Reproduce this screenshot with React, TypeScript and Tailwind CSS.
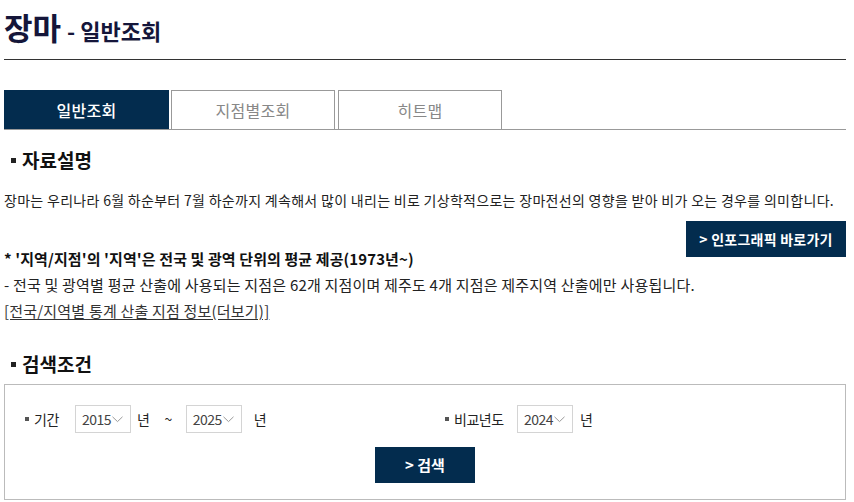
const NAVY = 'bg-[#032c4e]'

function YearSelect({ value }: { value: string }) {
  return (
    <div className="flex h-[28px] w-[56px] items-center border border-[#d4d4d4] bg-white pl-[6px] text-[14px] tracking-[-0.5px] text-[#444]">
      <span>{value}</span>
      <svg width="11" height="7" viewBox="0 0 11 7" className="ml-[1px]">
        <path d="M0.5 0.8 L5.5 5.6 L10.5 0.8" fill="none" stroke="#999" strokeWidth="1" />
      </svg>
    </div>
  )
}

function SectionTitle({ children }: { children: React.ReactNode }) {
  return (
    <h2 className="flex h-[24px] items-center text-[19px] font-bold leading-[24px] text-[#111]">
      <span className="ml-[7px] mr-[6px] inline-block h-[5px] w-[5px] bg-[#222]" />
      {children}
    </h2>
  )
}

export default function App() {
  return (
    <div className="w-[854px] bg-white pl-[4px] pr-[8px] font-['Noto_Sans_CJK_KR','Noto_Sans',sans-serif] text-[#222]">
      <div className="h-[60px] border-b border-[#333] pt-[9px]">
        <h1 className="flex items-baseline leading-[36px] text-[#15163a]">
          <span className="text-[31px] font-bold">장마</span>
          <span className="ml-[6px] text-[22px] font-bold">- 일반조회</span>
        </h1>
      </div>

      <div className="mt-[30px] flex h-[40px] border-b border-[#999]">
        <div className={`flex w-[165px] items-center justify-center ${NAVY} text-[16px] font-medium tracking-[0.3px] text-white`}>
          일반조회
        </div>
        <div className="ml-[2px] flex w-[164px] items-center justify-center border border-b-0 border-[#999] text-[16px] tracking-[0.3px] text-[#888]">
          지점별조회
        </div>
        <div className="ml-[3px] flex w-[164px] items-center justify-center border border-b-0 border-[#999] text-[16px] tracking-[0.3px] text-[#888]">
          히트맵
        </div>
      </div>

      <div className="mt-[18px]">
        <SectionTitle>자료설명</SectionTitle>
      </div>

      <p className="mt-[18px] text-[14px] leading-[20px] tracking-[0.3px]">
        장마는 우리나라 6월 하순부터 7월 하순까지 계속해서 많이 내리는 비로 기상학적으로는 장마전선의 영향을 받아 비가 오는 경우를 의미합니다.
      </p>

      <div className="mt-[11px] flex justify-end">
        <button className={`h-[36px] w-[160px] ${NAVY} text-[14px] font-bold tracking-[0.25px] text-white`}>
          &gt; 인포그래픽 바로가기
        </button>
      </div>

      <div className="mt-[-11px] text-[15px] leading-[26px] tracking-[0.2px]">
        <p className="font-bold tracking-[0.1px] text-[#111]">* '지역/지점'의 '지역'은 전국 및 광역 단위의 평균 제공(1973년~)</p>
        <p>- 전국 및 광역별 평균 산출에 사용되는 지점은 62개 지점이며 제주도 4개 지점은 제주지역 산출에만 사용됩니다.</p>
        <p className="text-[#333]">
          <a className="underline underline-offset-2">[전국/지역별 통계 산출 지점 정보(더보기)]</a>
        </p>
      </div>

      <div className="mt-[28px]">
        <SectionTitle>검색조건</SectionTitle>
      </div>

      <div className="mt-[8px] h-[116px] border border-[#bbb] pt-[20px]">
        <div className="grid h-[28px] grid-cols-2 text-[14px] tracking-[-0.5px]">
          <div className="flex items-center pl-[20px]">
            <span className="mr-[5px] inline-block h-[4px] w-[4px] bg-[#555]" />
            <span className="w-[41px]">기간</span>
            <YearSelect value="2015" />
            <span className="ml-[6px]">년</span>
            <span className="ml-[15px]">~</span>
            <span className="ml-[14px]"><YearSelect value="2025" /></span>
            <span className="ml-[12px]">년</span>
          </div>
          <div className="flex items-center pl-[20px]">
            <span className="mr-[5px] inline-block h-[4px] w-[4px] bg-[#555]" />
            <span className="w-[63px]">비교년도</span>
            <YearSelect value="2024" />
            <span className="ml-[7px]">년</span>
          </div>
        </div>
        <div className="mt-[14px] flex justify-center">
          <button className={`h-[36px] w-[100px] ${NAVY} text-[15px] font-bold text-white`}>
            &gt; 검색
          </button>
        </div>
      </div>
    </div>
  )
}
